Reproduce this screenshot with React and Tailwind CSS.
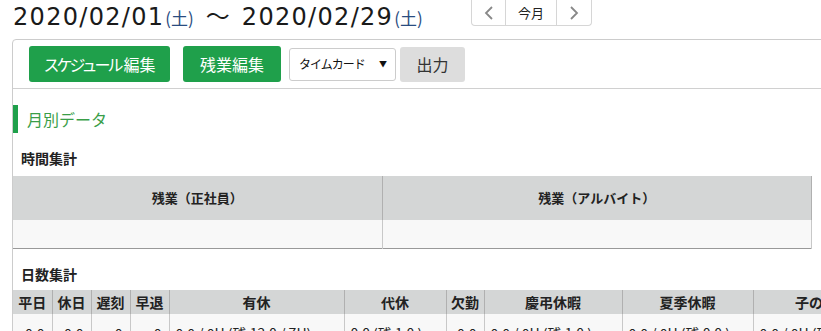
import React from "react";

export default function App() {
  const dayCols = [
    ["平日", 39, "0.0", "right"],
    ["休日", 39, "0.0", "right"],
    ["遅刻", 39, "0", "right"],
    ["早退", 39, "0", "right"],
    ["有休", 175, "0.0 / 0H (残 12.0 / 7H)", "left"],
    ["代休", 102, "0.0 (残 1.0 )", "left"],
    ["欠勤", 38, "0.0", "right"],
    ["慶弔休暇", 138, "0.0 / 0H (残 1.0 )", "left"],
    ["夏季休暇", 131, "0.0 / 0H (残 0.0 )", "left"],
    ["子の看護", 140, "0.0 / 0H (残 5.0 )", "left"],
  ];
  return (
    <div className="w-[821px] h-[331px] overflow-hidden bg-white text-[#222] [font-family:'Noto_Sans_CJK_JP','Noto_Sans',sans-serif]">
      <div className="flex items-start h-[39px]">
        <div className="pl-[13px] text-[24px] leading-[29px] text-[#1a1a1a] whitespace-nowrap w-[471px] [font-family:'DejaVu_Sans',sans-serif] tracking-[1.3px] flex items-baseline">
          <span>2020/02/01</span>
          <span className="ml-[1px] text-[17px] tracking-normal text-[#2a4c80] [font-family:'Noto_Sans_CJK_JP',sans-serif]">(土)</span>
          <span className="ml-[12px] mr-[12px] tracking-normal [font-family:'Noto_Sans_CJK_JP',sans-serif]">〜</span>
          <span>2020/02/29</span>
          <span className="ml-[1px] text-[17px] tracking-normal text-[#2a4c80] [font-family:'Noto_Sans_CJK_JP',sans-serif]">(土)</span>
        </div>
        <div className="flex h-[26px] border border-[#d6d6d6] border-t-0 rounded-b-[4px] text-[13px]">
          <div className="w-[34px] flex items-center justify-center border-r border-[#d6d6d6]">
            <svg width="10" height="14" viewBox="0 0 10 14"><path d="M8 1 L2 7 L8 13" fill="none" stroke="#888" strokeWidth="1.8" /></svg>
          </div>
          <div className="w-[51px] flex items-center justify-center border-r border-[#d6d6d6] text-[#222]">今月</div>
          <div className="w-[34px] flex items-center justify-center">
            <svg width="10" height="14" viewBox="0 0 10 14"><path d="M2 1 L8 7 L2 13" fill="none" stroke="#888" strokeWidth="1.8" /></svg>
          </div>
        </div>
      </div>

      <div className="ml-[12px] w-[830px] border border-[#cccccc] rounded-tl-[4px]">
        <div className="h-[49px] flex items-center pl-[16px] border-b border-[#d0d0d0]">
          <div className="h-[36px] w-[141px] bg-[#1fa04b] rounded-[3px] text-white text-[16px] flex items-center justify-center whitespace-nowrap">
            <span className="tracking-[-3px]">スケジュール</span>
            <span className="ml-[3px]">編集</span>
          </div>
          <div className="h-[36px] w-[98px] ml-[13px] bg-[#1fa04b] rounded-[3px] text-white text-[16px] flex items-center justify-center">
            残業編集
          </div>
          <div className="h-[33px] w-[107px] ml-[8px] border border-[#cccccc] rounded-[3px] bg-white flex items-center pl-[9px] text-[12px] text-[#111] whitespace-nowrap">
            <span className="tracking-[-1px]">タイムカード</span>
            <span className="ml-auto mr-[8px] text-[8px]">▼</span>
          </div>
          <div className="h-[35px] w-[65px] ml-[4px] bg-[#dddddd] rounded-[3px] text-[16px] text-[#333] flex items-center justify-center">
            出力
          </div>
        </div>

        <div className="pt-[16px]">
          <div className="flex items-center h-[28px] border-l-[5px] border-[#1fa04b] pl-[9px] text-[16px] text-[#3a9e48]">
            月別データ
          </div>
          <div className="pl-[8px] pt-[15px] pb-[8px] text-[14px] font-bold leading-[20px]">時間集計</div>
          <table className="w-[799px] border-collapse text-[13px]">
            <tbody>
              <tr className="h-[44px] bg-[#d4d6d6]">
                <th className="w-[369px] border-r border-[#b0b0b0] font-bold">残業（正社員）</th>
                <th className="font-bold border-r border-[#b0b0b0]">残業（アルバイト）</th>
              </tr>
              <tr className="h-[28px] bg-[#f8f8f8] border-b border-[#999]">
                <td className="border-r border-[#c8c8c8]"></td>
                <td className="border-r border-[#c8c8c8]"></td>
              </tr>
            </tbody>
          </table>
          <div className="pl-[8px] pt-[16px] pb-[6px] text-[14px] font-bold leading-[19px]">日数集計</div>
          <table className="border-collapse text-[14px] table-fixed w-[840px]">
            <tbody>
              <tr className="h-[24px] bg-[#d4d6d6]">
                {dayCols.map(([h, w]) => (
                  <th
                    key={h}
                    style={{ width: w }}
                    className="border-r border-[#b0b0b0] font-bold p-0 whitespace-nowrap leading-[24px]"
                  >
                    {h}
                  </th>
                ))}
              </tr>
              <tr className="h-[30px] bg-[#f8f8f8]">
                {dayCols.map(([h, w, v, a]) => (
                  <td
                    key={h}
                    className={
                      a === "right"
                        ? "border-r border-[#c8c8c8] whitespace-nowrap overflow-hidden pt-[9px] align-top text-right pr-[7px]"
                        : "border-r border-[#c8c8c8] whitespace-nowrap overflow-hidden pt-[9px] align-top text-left pl-[6px]"
                    }
                  >
                    {v}
                  </td>
                ))}
              </tr>
            </tbody>
          </table>
        </div>
      </div>
    </div>
  );
}
